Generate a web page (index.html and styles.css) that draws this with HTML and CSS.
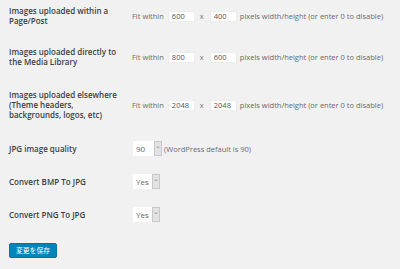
FILE: index.html
```html
<!DOCTYPE html>
<html lang="en">
<head>
    <meta charset="UTF-8">
    <title>Imsanity Settings</title>
    <link rel="stylesheet" href="styles.css">
</head>
<body>
    <form class="settings">
        <div class="row">
            <label class="row-label">Images uploaded within a Page/Post</label>
            <div class="row-field">
                <span class="hint">Fit within</span>
                <input class="size-input" type="text" value="600">
                <span class="times">x</span>
                <input class="size-input" type="text" value="400">
                <span class="hint">pixels width/height (or enter 0 to disable)</span>
            </div>
        </div>

        <div class="row row-spaced">
            <label class="row-label">Images uploaded directly to the Media Library</label>
            <div class="row-field">
                <span class="hint">Fit within</span>
                <input class="size-input" type="text" value="800">
                <span class="times">x</span>
                <input class="size-input" type="text" value="600">
                <span class="hint">pixels width/height (or enter 0 to disable)</span>
            </div>
        </div>

        <div class="row row-tall">
            <label class="row-label">Images uploaded elsewhere (Theme headers, backgrounds, logos, etc)</label>
            <div class="row-field">
                <span class="hint">Fit within</span>
                <input class="size-input" type="text" value="2048">
                <span class="times">x</span>
                <input class="size-input" type="text" value="2048">
                <span class="hint">pixels width/height (or enter 0 to disable)</span>
            </div>
        </div>

        <div class="row row-spaced">
            <label class="row-label">JPG image quality</label>
            <div class="row-field">
                <span class="dropdown dropdown-wide"><span class="dropdown-value">90</span><span class="dropdown-arrow">&#8964;</span></span>
                <span class="hint">(WordPress default is 90)</span>
            </div>
        </div>

        <div class="row">
            <label class="row-label">Convert BMP To JPG</label>
            <div class="row-field">
                <span class="dropdown"><span class="dropdown-value">Yes</span><span class="dropdown-arrow">&#8964;</span></span>
            </div>
        </div>

        <div class="row">
            <label class="row-label">Convert PNG To JPG</label>
            <div class="row-field">
                <span class="dropdown"><span class="dropdown-value">Yes</span><span class="dropdown-arrow">&#8964;</span></span>
            </div>
        </div>

        <div class="actions">
            <button type="button" class="save-button">変更を保存</button>
        </div>
    </form>
</body>
</html>
```

FILE: styles.css
```css
body {
    margin: 0;
    background-color: #f1f1f1;
    font-family: 'Open Sans', 'Noto Sans', sans-serif;
    font-size: 8px;
    color: #23282d;
}

.settings {
    display: flex;
    flex-direction: column;
    gap: 18px;
    padding: 6px 0 0 9px;
}

.row {
    display: flex;
    align-items: center;
}

.row-spaced {
    margin-top: 3px;
}

.row-tall {
    margin-top: 5px;
}

.row-label {
    width: 117px;
    margin-right: 6px;
    font-weight: 600;
    line-height: 10px;
    color: #3a3f44;
}

.row-field {
    display: flex;
    align-items: center;
    white-space: nowrap;
    font-size: 7.5px;
}

.hint {
    color: #6b6b6b;
}

.size-input {
    width: 27px;
    height: 11px;
    box-sizing: border-box;
    margin: 0 0 0 4px;
    padding: 0 0 0 3px;
    border: 1px solid #ececec;
    background-color: #fff;
    font-family: inherit;
    font-size: 7.5px;
    color: #555;
    outline: none;
}

.times {
    color: #777;
    margin: 0 2px 0 5px;
}

.size-input + .hint {
    margin-left: 3px;
}

.dropdown {
    display: inline-flex;
    width: 27px;
    height: 15px;
    margin-left: 1px;
    box-sizing: border-box;
    background-color: #fff;
}

.dropdown-wide {
    width: 29px;
}

.dropdown-value {
    flex: 1;
    padding-left: 3px;
    line-height: 15px;
    font-size: 8px;
    color: #666;
}

.dropdown-arrow {
    width: 8px;
    box-sizing: border-box;
    background-color: #e2e2e2;
    border: 1px solid #c8c8c8;
    color: #888;
    font-size: 7px;
    line-height: 8px;
    text-align: center;
}

.dropdown + .hint {
    margin-left: 2px;
}

.actions {
    display: flex;
    margin-top: 3px;
}

.save-button {
    height: 15px;
    padding: 0 6px;
    border: 1px solid #0073aa;
    border-radius: 2px;
    background-color: #0085ba;
    color: #fff;
    font-family: 'Noto Sans CJK JP', sans-serif;
    font-size: 6.8px;
    line-height: 13px;
    cursor: pointer;
}
```
